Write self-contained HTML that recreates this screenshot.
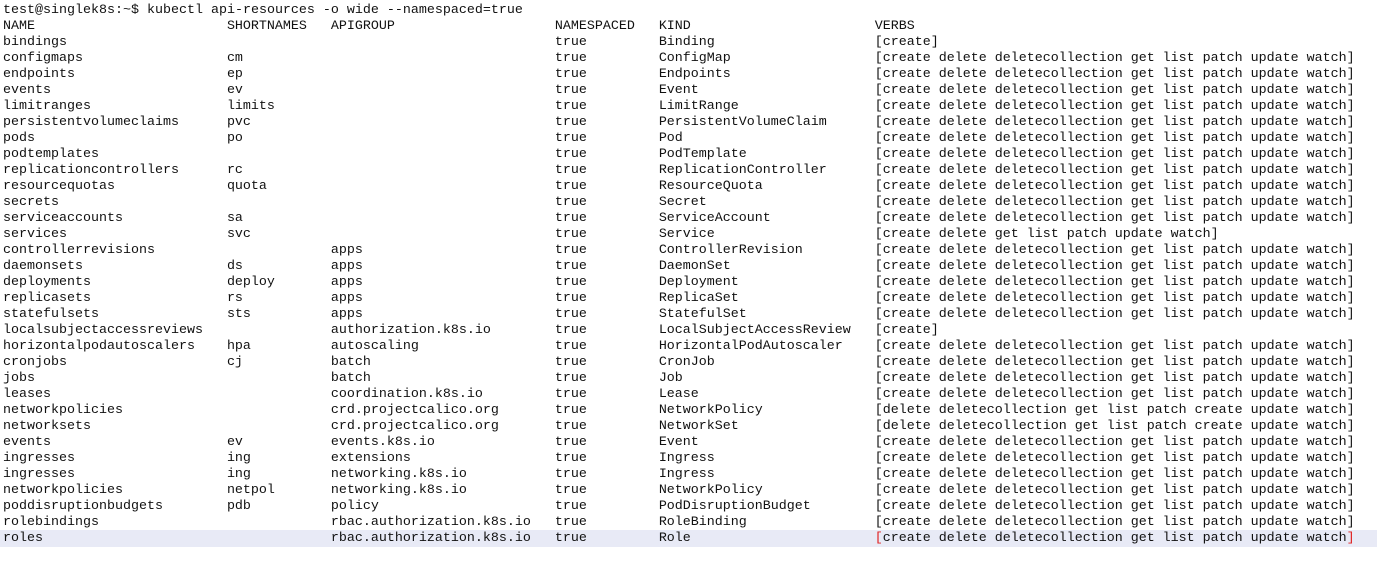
<!DOCTYPE html>
<html><head><meta charset="utf-8"><style>
html,body{margin:0;padding:0;background:#fff;width:1377px;height:561px;overflow:hidden}
body{font-family:"Liberation Mono","Courier New",monospace;font-size:13.33px;color:#111;padding-top:3px}
.r{height:16px;line-height:16px;white-space:pre;padding-left:3px}
.r span{display:inline-block;}
.a{width:28ch}.b{width:13ch}.c{width:28ch}.d{width:13ch}.e{width:27ch}
.hl{background:#e8eaf6;height:16px;margin-top:-1px;padding-top:1px}
.red{color:#e02020}
</style></head><body>
<div class="r">test@singlek8s:~$ kubectl api-resources -o wide --namespaced=true</div>
<div class="r"><span class="a">NAME</span><span class="b">SHORTNAMES</span><span class="c">APIGROUP</span><span class="d">NAMESPACED</span><span class="e">KIND</span>VERBS</div>
<div class="r"><span class="a">bindings</span><span class="b"></span><span class="c"></span><span class="d">true</span><span class="e">Binding</span>[create]</div>
<div class="r"><span class="a">configmaps</span><span class="b">cm</span><span class="c"></span><span class="d">true</span><span class="e">ConfigMap</span>[create delete deletecollection get list patch update watch]</div>
<div class="r"><span class="a">endpoints</span><span class="b">ep</span><span class="c"></span><span class="d">true</span><span class="e">Endpoints</span>[create delete deletecollection get list patch update watch]</div>
<div class="r"><span class="a">events</span><span class="b">ev</span><span class="c"></span><span class="d">true</span><span class="e">Event</span>[create delete deletecollection get list patch update watch]</div>
<div class="r"><span class="a">limitranges</span><span class="b">limits</span><span class="c"></span><span class="d">true</span><span class="e">LimitRange</span>[create delete deletecollection get list patch update watch]</div>
<div class="r"><span class="a">persistentvolumeclaims</span><span class="b">pvc</span><span class="c"></span><span class="d">true</span><span class="e">PersistentVolumeClaim</span>[create delete deletecollection get list patch update watch]</div>
<div class="r"><span class="a">pods</span><span class="b">po</span><span class="c"></span><span class="d">true</span><span class="e">Pod</span>[create delete deletecollection get list patch update watch]</div>
<div class="r"><span class="a">podtemplates</span><span class="b"></span><span class="c"></span><span class="d">true</span><span class="e">PodTemplate</span>[create delete deletecollection get list patch update watch]</div>
<div class="r"><span class="a">replicationcontrollers</span><span class="b">rc</span><span class="c"></span><span class="d">true</span><span class="e">ReplicationController</span>[create delete deletecollection get list patch update watch]</div>
<div class="r"><span class="a">resourcequotas</span><span class="b">quota</span><span class="c"></span><span class="d">true</span><span class="e">ResourceQuota</span>[create delete deletecollection get list patch update watch]</div>
<div class="r"><span class="a">secrets</span><span class="b"></span><span class="c"></span><span class="d">true</span><span class="e">Secret</span>[create delete deletecollection get list patch update watch]</div>
<div class="r"><span class="a">serviceaccounts</span><span class="b">sa</span><span class="c"></span><span class="d">true</span><span class="e">ServiceAccount</span>[create delete deletecollection get list patch update watch]</div>
<div class="r"><span class="a">services</span><span class="b">svc</span><span class="c"></span><span class="d">true</span><span class="e">Service</span>[create delete get list patch update watch]</div>
<div class="r"><span class="a">controllerrevisions</span><span class="b"></span><span class="c">apps</span><span class="d">true</span><span class="e">ControllerRevision</span>[create delete deletecollection get list patch update watch]</div>
<div class="r"><span class="a">daemonsets</span><span class="b">ds</span><span class="c">apps</span><span class="d">true</span><span class="e">DaemonSet</span>[create delete deletecollection get list patch update watch]</div>
<div class="r"><span class="a">deployments</span><span class="b">deploy</span><span class="c">apps</span><span class="d">true</span><span class="e">Deployment</span>[create delete deletecollection get list patch update watch]</div>
<div class="r"><span class="a">replicasets</span><span class="b">rs</span><span class="c">apps</span><span class="d">true</span><span class="e">ReplicaSet</span>[create delete deletecollection get list patch update watch]</div>
<div class="r"><span class="a">statefulsets</span><span class="b">sts</span><span class="c">apps</span><span class="d">true</span><span class="e">StatefulSet</span>[create delete deletecollection get list patch update watch]</div>
<div class="r"><span class="a">localsubjectaccessreviews</span><span class="b"></span><span class="c">authorization.k8s.io</span><span class="d">true</span><span class="e">LocalSubjectAccessReview</span>[create]</div>
<div class="r"><span class="a">horizontalpodautoscalers</span><span class="b">hpa</span><span class="c">autoscaling</span><span class="d">true</span><span class="e">HorizontalPodAutoscaler</span>[create delete deletecollection get list patch update watch]</div>
<div class="r"><span class="a">cronjobs</span><span class="b">cj</span><span class="c">batch</span><span class="d">true</span><span class="e">CronJob</span>[create delete deletecollection get list patch update watch]</div>
<div class="r"><span class="a">jobs</span><span class="b"></span><span class="c">batch</span><span class="d">true</span><span class="e">Job</span>[create delete deletecollection get list patch update watch]</div>
<div class="r"><span class="a">leases</span><span class="b"></span><span class="c">coordination.k8s.io</span><span class="d">true</span><span class="e">Lease</span>[create delete deletecollection get list patch update watch]</div>
<div class="r"><span class="a">networkpolicies</span><span class="b"></span><span class="c">crd.projectcalico.org</span><span class="d">true</span><span class="e">NetworkPolicy</span>[delete deletecollection get list patch create update watch]</div>
<div class="r"><span class="a">networksets</span><span class="b"></span><span class="c">crd.projectcalico.org</span><span class="d">true</span><span class="e">NetworkSet</span>[delete deletecollection get list patch create update watch]</div>
<div class="r"><span class="a">events</span><span class="b">ev</span><span class="c">events.k8s.io</span><span class="d">true</span><span class="e">Event</span>[create delete deletecollection get list patch update watch]</div>
<div class="r"><span class="a">ingresses</span><span class="b">ing</span><span class="c">extensions</span><span class="d">true</span><span class="e">Ingress</span>[create delete deletecollection get list patch update watch]</div>
<div class="r"><span class="a">ingresses</span><span class="b">ing</span><span class="c">networking.k8s.io</span><span class="d">true</span><span class="e">Ingress</span>[create delete deletecollection get list patch update watch]</div>
<div class="r"><span class="a">networkpolicies</span><span class="b">netpol</span><span class="c">networking.k8s.io</span><span class="d">true</span><span class="e">NetworkPolicy</span>[create delete deletecollection get list patch update watch]</div>
<div class="r"><span class="a">poddisruptionbudgets</span><span class="b">pdb</span><span class="c">policy</span><span class="d">true</span><span class="e">PodDisruptionBudget</span>[create delete deletecollection get list patch update watch]</div>
<div class="r"><span class="a">rolebindings</span><span class="b"></span><span class="c">rbac.authorization.k8s.io</span><span class="d">true</span><span class="e">RoleBinding</span>[create delete deletecollection get list patch update watch]</div>
<div class="r hl"><span class="a">roles</span><span class="b"></span><span class="c">rbac.authorization.k8s.io</span><span class="d">true</span><span class="e">Role</span><span class="red">[</span>create delete deletecollection get list patch update watch<span class="red">]</span></div>
</body></html>
